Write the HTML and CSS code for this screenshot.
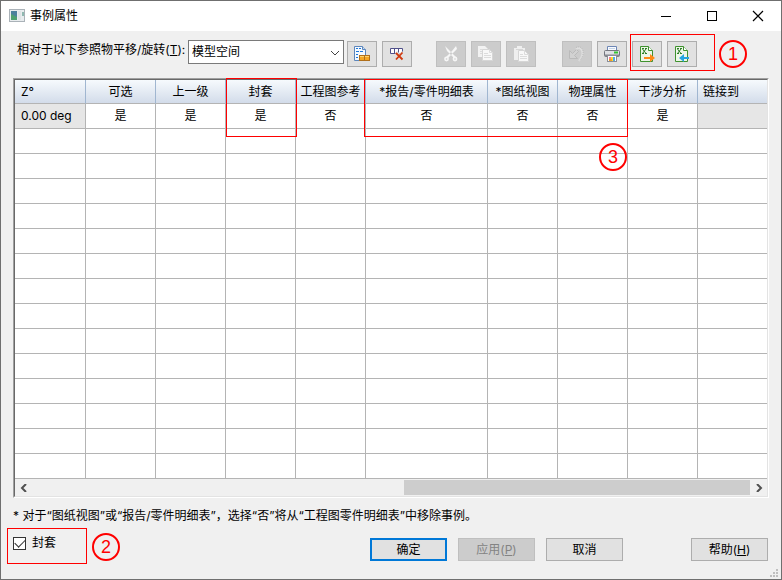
FILE: index.html
```
<!DOCTYPE html>
<html lang="zh-CN">
<head>
    <meta charset="UTF-8">
    <meta name="viewport" content="width=device-width, initial-scale=1.0">
    <title>事例属性</title>
    <link rel="stylesheet" href="styles.css">
</head>
<body>
    <div class="window">
        <header class="titlebar">
            <svg class="app-icon" width="16" height="14" viewBox="0 0 16 14">
                <rect x="0.5" y="0.5" width="15" height="12" fill="#e8ecee" stroke="#aab2b8"/>
                <rect x="2" y="2" width="6" height="9" fill="#4c809c"/>
                <path d="M2 11V5l6 3v3z" fill="#4fa06f"/>
                <rect x="9" y="2" width="3" height="9" fill="#dfe4e6"/>
                <rect x="13" y="3" width="2" height="4" fill="#8fb8b0"/>
            </svg>
            <h1>事例属性</h1>
            <div class="window-buttons">
                <button type="button" aria-label="最小化">
                    <svg width="12" height="12" viewBox="0 0 12 12"><path d="M1 6.5h10" stroke="#000"/></svg>
                </button>
                <button type="button" aria-label="最大化">
                    <svg width="12" height="12" viewBox="0 0 12 12"><rect x="1.5" y="1.5" width="9" height="9" fill="none" stroke="#000"/></svg>
                </button>
                <button type="button" aria-label="关闭">
                    <svg width="12" height="12" viewBox="0 0 12 12"><path d="M1 1l10 10M11 1L1 11" stroke="#000" stroke-width="1.2"/></svg>
                </button>
            </div>
        </header>

        <main class="content">
            <div class="toolbar">
                <label for="reference">相对于以下参照物平移/旋转(<u>T</u>):</label>
                <div class="combo">
                    <select id="reference">
                        <option>模型空间</option>
                    </select>
                    <svg width="10" height="6" viewBox="0 0 10 6"><path d="M1 1l4 4 4-4" fill="none" stroke="#444"/></svg>
                </div>
                <div class="tool-group">
                    <button type="button" class="tool" aria-label="报告">
                        <svg width="16" height="16" viewBox="0 0 16 16">
                            <path d="M0.500 0.500h8l3 3v11h-11z" fill="#f4f9ff" stroke="#5d86bb"/>
                            <path d="M8.500 0.500v3h3" fill="#c5dbf3" stroke="#5d86bb"/>
                            <path d="M2 2.500h2M5 2.500h2M2 5.500h3M6 5.500h3M2 8.500h2M2 11.500h2" stroke="#1f78d8"/>
                            <rect x="5.500" y="9.500" width="5" height="5" fill="#f5a623" stroke="#b0701c"/>
                            <rect x="10.500" y="9.500" width="5" height="5" fill="#f5a623" stroke="#b0701c"/>
                            <path d="M6 10.500h4M11 10.500h4" stroke="#ffd36b"/>
                        </svg>
                    </button>
                    <button type="button" class="tool" aria-label="删除列">
                        <svg width="16" height="16" viewBox="0 0 16 16">
                            <path d="M1.500 2.500h12v5h-12zM5.500 2.500v5M9.500 2.500v5" fill="#fff" stroke="#50508a"/>
                            <path d="M7 6l7 7M14 6l-7 7" stroke="#e1e1e1" stroke-width="3"/>
                            <path d="M7 7l6.500 6.500M13.500 6.500L7 13.500" stroke="#d03a10" stroke-width="1.800"/>
                        </svg>
                    </button>
                </div>
                <div class="tool-group">
                    <button type="button" class="tool" aria-label="剪切" disabled>
                        <svg width="16" height="16" viewBox="0 0 16 16">
                            <path d="M2 0l2 5 7 7 2-1-7-7zM13 0l1 3-9 9-2-1 6-6z" fill="#f6f6f6"/>
                            <circle cx="3.500" cy="13" r="1.600" fill="none" stroke="#f6f6f6" stroke-width="1.600"/>
                            <circle cx="12" cy="13" r="1.600" fill="none" stroke="#f6f6f6" stroke-width="1.600"/>
                        </svg>
                    </button>
                    <button type="button" class="tool" aria-label="复制" disabled>
                        <svg width="16" height="16" viewBox="0 0 16 16">
                            <path d="M0 0h7l3 3v8H0z" fill="#f2f2f2"/>
                            <path d="M2 3.500h3M2 5.500h3M2 7.500h3" stroke="#dcdcdc"/>
                            <path d="M4.500 3.500h7l3 3v8h-10z" fill="#f8f8f8" stroke="#d6d6d6"/>
                            <path d="M11.500 3.500v3h3M6 7.500h4M6 9.500h7M6 11.500h7" fill="none" stroke="#dcdcdc"/>
                        </svg>
                    </button>
                    <button type="button" class="tool" aria-label="粘贴" disabled>
                        <svg width="16" height="16" viewBox="0 0 16 16">
                            <path d="M1 2h3V0h5v2h3v12H1z" fill="#efefef"/>
                            <path d="M3 3.500h7" stroke="#d6d6d6"/>
                            <path d="M5.500 4.500h6l4 4v7h-10z" fill="#f8f8f8" stroke="#d6d6d6"/>
                            <path d="M11.500 4.500v4h4M7 8.500h3M7 10.500h7M7 12.500h7" fill="none" stroke="#dcdcdc"/>
                        </svg>
                    </button>
                </div>
                <div class="tool-group">
                    <button type="button" class="tool" aria-label="撤消" disabled>
                        <svg width="16" height="16" viewBox="0 0 16 16">
                            <path d="M0.500 4.500v8h8l-3-3 4-4-2-2-4 4z" fill="#d2d2d2" stroke="#bababa"/>
                            <path d="M7 3q3-2 5 0 3 4 0 9l-2 3" fill="none" stroke="#dedede" stroke-width="2"/>
                            <path d="M7 1.500q5-2 7 3 1 5-3 10" fill="none" stroke="#b6b6b6" stroke-dasharray="1 1"/>
                        </svg>
                    </button>
                    <button type="button" class="tool" aria-label="打印">
                        <svg width="16" height="16" viewBox="0 0 16 16">
                            <path d="M3.500 5V0.500h9V5" fill="#f8fbff" stroke="#6d86b5"/>
                            <path d="M5 2.500h6" stroke="#c4d4e8"/>
                            <rect x="0.500" y="4.500" width="15" height="6" rx="1" fill="#dfe0e4" stroke="#74777f"/>
                            <path d="M1 9.500h14" stroke="#85888f" stroke-width="2"/>
                            <path d="M10 6.500h4" stroke="#35c535" stroke-width="2"/>
                            <rect x="3.500" y="9.500" width="9" height="6" fill="#fff" stroke="#8b8e97"/>
                            <path d="M5 11h2v4H5z" fill="#f27d9b"/>
                            <path d="M7 11h2v4H7z" fill="#ffe02c"/>
                            <path d="M9 11h2v4H9z" fill="#52a9e8"/>
                            <path d="M5 13h3v2H5z" fill="#f0a028"/>
                        </svg>
                    </button>
                    <button type="button" class="tool" aria-label="导出到 Excel">
                        <svg width="16" height="16" viewBox="0 0 16 16">
                            <path d="M1.500 0.500h8l4 4v11h-12z" fill="#eef6e8" stroke="#3f922f"/>
                            <path d="M9.500 0.500v4h4" fill="#fff" stroke="#3f922f"/>
                            <path d="M3.500 3l3.500 4.500M7 3L3.500 7.500M3 2.500h2M6 2.500h2M3 7.500h2M6 7.500h2" stroke="#2d7f27"/>
                            <path d="M5 11h6V8l5 4-5 4v-3H5z" fill="#ff8a16"/>
                        </svg>
                    </button>
                    <button type="button" class="tool" aria-label="从 Excel 导入">
                        <svg width="16" height="16" viewBox="0 0 16 16">
                            <path d="M1.500 0.500h8l4 4v11h-12z" fill="#eef6e8" stroke="#3f922f"/>
                            <path d="M9.500 0.500v4h4" fill="#fff" stroke="#3f922f"/>
                            <path d="M3.500 3l3.500 4.500M7 3L3.500 7.500M3 2.500h2M6 2.500h2M3 7.500h2M6 7.500h2" stroke="#2d7f27"/>
                            <path d="M15 11h-5V8l-5 4 5 4v-3h5z" fill="#25a5e0"/>
                        </svg>
                    </button>
                    <span class="mark mark-tools"></span>
                    <span class="badge badge-one">1</span>
                </div>
            </div>

            <div class="grid">
                <div class="grid-inner">
                    <table>
                        <colgroup>
                            <col class="col-first">
                            <col class="col" span="4">
                            <col class="col-wide">
                            <col class="col" span="3">
                            <col>
                        </colgroup>
                        <thead>
                            <tr>
                                <th class="left">Z°</th>
                                <th>可选</th>
                                <th>上一级</th>
                                <th>封套</th>
                                <th>工程图参考</th>
                                <th>*报告/零件明细表</th>
                                <th>*图纸视图</th>
                                <th>物理属性</th>
                                <th>干涉分析</th>
                                <th class="left">链接到</th>
                            </tr>
                        </thead>
                        <tbody id="rows">
                            <tr>
                                <td class="left readonly">0.00 deg</td>
                                <td>是</td>
                                <td>是</td>
                                <td>是</td>
                                <td>否</td>
                                <td>否</td>
                                <td>否</td>
                                <td>否</td>
                                <td>是</td>
                                <td class="readonly"></td>
                            </tr>
                        </tbody>
                    </table>
                    <div class="scrollbar">
                        <button type="button" aria-label="向左滚动">
                            <svg width="8" height="8" viewBox="0 0 8 8"><path d="M6 0L2 4l4 4" fill="none" stroke="#505050" stroke-width="2"/></svg>
                        </button>
                        <div class="track"><div class="thumb"></div></div>
                        <button type="button" aria-label="向右滚动">
                            <svg width="8" height="8" viewBox="0 0 8 8"><path d="M2 0l4 4-4 4" fill="none" stroke="#505050" stroke-width="2"/></svg>
                        </button>
                    </div>
                </div>
                <span class="mark mark-envelope"></span>
                <span class="mark mark-columns"></span>
                <span class="badge badge-three">3</span>
            </div>

            <p class="note">* 对于“图纸视图”或“报告/零件明细表”，选择“否”将从“工程图零件明细表”中移除事例。</p>

            <footer class="footer">
                <div class="check">
                    <input type="checkbox" id="envelope" checked>
                    <label for="envelope">封套</label>
                    <span class="mark mark-check"></span>
                    <span class="badge badge-two">2</span>
                </div>
                <div class="actions">
                    <button type="button" class="action primary">确定</button>
                    <button type="button" class="action" disabled>应用(<u>P</u>)</button>
                    <button type="button" class="action">取消</button>
                    <button type="button" class="action help">帮助(<u>H</u>)</button>
                </div>
            </footer>
        </main>

        <svg class="grip" width="8" height="8" viewBox="0 0 8 8">
            <path d="M6 0h2v2H6zM3 3h2v2H3zM6 3h2v2H6zM0 6h2v2H0zM3 6h2v2H3zM6 6h2v2H6z" fill="#bfbfbf"/>
        </svg>
    </div>

    <script>
        // Fill the rest of the grid with empty rows
        const rows = document.getElementById('rows');
        for (let i = 0; i < 14; i++) {
            const row = document.createElement('tr');
            row.innerHTML = '<td></td>'.repeat(10);
            rows.appendChild(row);
        }
    </script>
</body>
</html>
```
FILE: styles.css
```
* {
    box-sizing: border-box;
}
body {
    margin: 0;
    font-family: Inter, "Noto Sans CJK SC", sans-serif;
    font-size: 12px;
    line-height: 16px;
    color: #000;
}
button, select, input {
    font: inherit;
    color: inherit;
    margin: 0;
}
svg {
    display: block;
}
.window {
    position: relative;
    min-height: 100vh;
    border: 1px solid #6f6f6f;
    background: #f0f0f0;
}

/* Title bar */
.titlebar {
    display: flex;
    align-items: center;
    height: 30px;
    padding-left: 8px;
    background: #fff;
}
.titlebar h1 {
    margin: 0 0 0 5px;
    font-size: 12px;
    font-weight: normal;
}
.window-buttons {
    display: flex;
    margin-left: auto;
}
.window-buttons button {
    display: flex;
    align-items: center;
    justify-content: center;
    width: 46px;
    height: 30px;
    padding: 0;
    border: none;
    background: none;
}

/* Toolbar */
.content {
    padding: 9px 12px 0;
}
.toolbar {
    display: flex;
    align-items: flex-start;
    height: 38px;
    padding-left: 4px;
}
.toolbar label {
    width: 171px;
    padding-top: 2px;
    white-space: nowrap;
}
.combo {
    position: relative;
    width: 156px;
}
.combo select {
    display: block;
    width: 100%;
    height: 24px;
    padding: 0 20px 0 3px;
    border: 1px solid #7a7a7a;
    border-radius: 0;
    background: #fff;
    appearance: none;
}
.combo svg {
    position: absolute;
    top: 10px;
    right: 4px;
    pointer-events: none;
}
.tool-group {
    position: relative;
    display: flex;
    gap: 5px;
    margin: 1px 0 0 24px;
}
.combo + .tool-group {
    margin-left: 3px;
}
.tool-group:last-child {
    margin-left: 26px;
}
.tool {
    display: flex;
    align-items: center;
    justify-content: center;
    width: 30px;
    height: 26px;
    padding: 0;
    border: 1px solid #adadad;
    background: #e1e1e1;
}
.tool:disabled {
    border-color: #bfbfbf;
    background: #ccc;
}

/* Grid */
.grid {
    position: relative;
    border: 1px solid;
    border-color: #a0a0a0 #fff #fff #a0a0a0;
}
.grid-inner {
    border: 1px solid;
    border-color: #696969 #e3e3e3 #e3e3e3 #696969;
}
table {
    width: 100%;
    table-layout: fixed;
    border-collapse: separate;
    border-spacing: 0;
    background: #fff;
}
.col-first {
    width: 71px;
}
.col {
    width: 70px;
}
.col-wide {
    width: 122px;
}
th, td {
    height: 25px;
    padding: 0;
    border-right: 1px solid #b4b4b4;
    border-bottom: 1px solid #b4b4b4;
    font-weight: normal;
    text-align: center;
    white-space: nowrap;
}
th {
    height: 24px;
    border-right-color: #a0b6d0;
    background: linear-gradient(#f6fafd, #d3dcea);
}
th:last-child, td:last-child {
    border-right: none;
}
.left {
    padding-left: 6px;
    text-align: left;
}
.left:last-child {
    padding-left: 5px;
}
.readonly {
    background: #e6e6e6;
}
.scrollbar {
    display: flex;
    height: 17px;
    padding: 1px 0;
}
.scrollbar button {
    display: flex;
    align-items: center;
    justify-content: center;
    width: 17px;
    padding: 0;
    border: none;
    background: none;
}
.track {
    flex: 1;
}
.thumb {
    width: 346px;
    height: 100%;
    margin-left: auto;
    background: #cdcdcd;
}

/* Footer */
.note {
    margin: 10px 0 14px;
}
.footer {
    display: flex;
    align-items: flex-start;
    justify-content: space-between;
    padding-right: 1px;
}
.check {
    position: relative;
    display: flex;
    align-items: center;
    gap: 6px;
    margin-top: -3px;
}
.check input {
    display: grid;
    place-content: center;
    width: 13px;
    height: 13px;
    border: 1px solid #333;
    background: #fff;
    appearance: none;
}
.check input:checked::before {
    content: "";
    width: 9px;
    height: 5px;
    border: solid #333;
    border-width: 0 0 1px 1px;
    transform: translateY(-1px) rotate(-45deg);
}
.actions {
    display: flex;
    gap: 11px;
}
.action {
    width: 77px;
    height: 23px;
    padding: 0;
    border: 1px solid #adadad;
    background: #e1e1e1;
}
.action:disabled {
    border-color: #bfbfbf;
    background: #ccc;
    color: #838383;
}
.primary {
    border: 2px solid #0078d7;
}
.help {
    margin-left: 57px;
}
.grip {
    position: absolute;
    right: 3px;
    bottom: 2px;
}

/* Red call-outs drawn over the dialog */
.mark {
    position: absolute;
    border: 1px solid #f00;
    pointer-events: none;
}
.mark-tools {
    top: -7px;
    left: 68px;
    width: 85px;
    height: 37px;
}
.mark-envelope {
    top: -1px;
    left: 212px;
    width: 71px;
    height: 59px;
}
.mark-columns {
    top: 0;
    left: 350px;
    width: 264px;
    height: 58px;
}
.mark-check {
    top: -7px;
    left: -6px;
    width: 80px;
    height: 36px;
}
.badge {
    position: absolute;
    width: 28px;
    height: 28px;
    border: 2px solid #f00;
    border-radius: 50%;
    color: #f00;
    font-family: "Liberation Sans", Arial, sans-serif;
    font-size: 18px;
    line-height: 24px;
    text-align: center;
}
.badge-one {
    top: -1px;
    left: 157px;
}
.badge-two {
    top: -2px;
    left: 79px;
}
.badge-three {
    top: 64px;
    left: 585px;
}
```
